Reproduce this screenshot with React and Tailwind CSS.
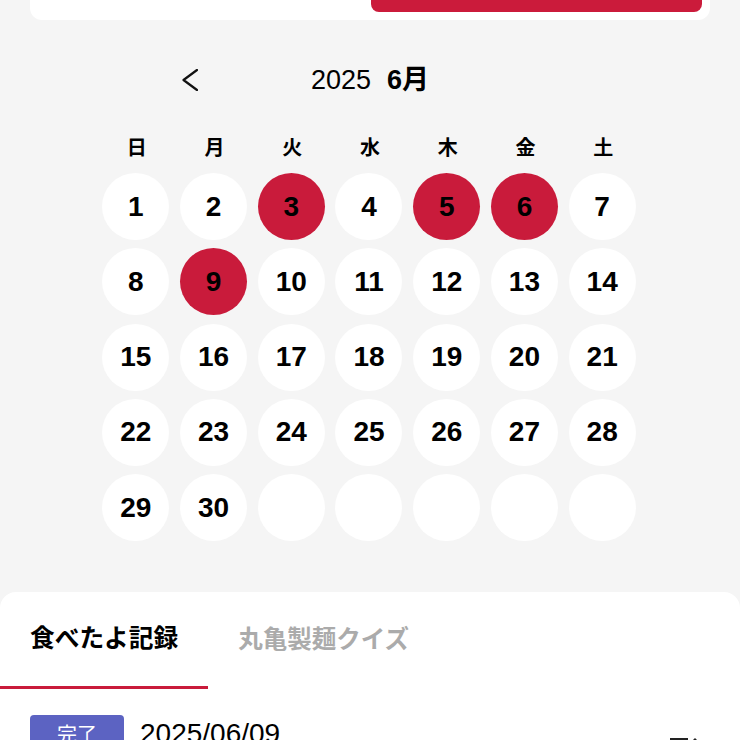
import React from "react";

const font = { fontFamily: '"Liberation Sans", "Noto Sans CJK JP", sans-serif' };

const weekdays = ["日", "月", "火", "水", "木", "金", "土"];
const eaten = [3, 5, 6, 9];

export default function App() {
  // June 2025 starts on a Sunday
  const days = [];
  for (let d = 1; d <= 30; d++) days.push(d);
  while (days.length < 35) days.push(null);

  return (
    <div
      className="w-[740px] h-[740px] overflow-hidden bg-[#f5f5f5] text-black"
      style={font}
    >
      {/* top card (scrolled off) */}
      <div className="mx-[30px] bg-white rounded-b-xl px-2 pb-2 flex justify-end">
        <div className="w-[331px] h-3 bg-[#cb1b3b] rounded-b-lg" />
      </div>

      {/* month header */}
      <div className="mt-[44px] w-[390px] mx-auto h-8 flex items-center justify-between">
        <button className="w-[30px] h-8 flex items-center justify-center">
          <svg width="16" height="22" viewBox="0 0 16 22" fill="none">
            <path d="M15 1 L1.5 11 L15 21" stroke="#111" strokeWidth="2.2" strokeLinecap="round" strokeLinejoin="round" />
          </svg>
        </button>
        <div className="text-[27px] leading-8 flex items-baseline">
          <span>2025</span>
          <span className="ml-[16px] font-bold">6月</span>
        </div>
        <div className="w-[30px] h-8" />
      </div>

      {/* weekdays */}
      <div className="mt-[38px] w-[544px] mx-auto grid grid-cols-7">
        {weekdays.map((w) => (
          <div key={w} className="text-center text-[20px] leading-7 font-semibold">
            {w}
          </div>
        ))}
      </div>

      {/* days */}
      <div className="mt-[11px] w-[544px] mx-auto -translate-x-px grid grid-cols-7 gap-y-[8.25px]">
        {days.map((d, i) => (
          <div key={i} className="flex justify-center">
            <div
              className={`w-[67px] h-[67px] rounded-full flex items-center justify-center text-[28px] font-bold ${
                eaten.includes(d) ? "bg-[#c91b3b]" : "bg-white"
              }`}
            >
              {d}
            </div>
          </div>
        ))}
      </div>

      {/* bottom panel */}
      <div className="mt-[51px] bg-white rounded-t-2xl">
        <div className="flex">
          <div className="h-[97px] px-[30px] flex items-center border-b-[3px] border-[#c91b3b] text-[24.7px] font-bold">
            食べたよ記録
          </div>
          <div className="h-[97px] px-[30px] flex items-center text-[24.5px] font-bold text-[#ababab]">
            丸亀製麺クイズ
          </div>
        </div>

        <div className="px-[30px] pt-[26px] flex items-start">
          <div className="w-[94px] h-[40px] rounded bg-[#5c63c2] text-white text-[20px] flex items-center justify-center">
            完了
          </div>
          <div className="ml-4 text-[28px] leading-none pt-[5px]">2025/06/09</div>
          <div className="ml-auto mt-[23px] mr-[10px]">
            <svg width="30" height="30" viewBox="0 0 30 30" fill="#222">
              <rect x="0" y="0" width="18" height="3" />
              <rect x="0" y="8" width="18" height="3" />
              <rect x="0" y="16" width="11" height="3" />
              <path d="M25 0 L29 4 L15 18 L11 18 L11 14 Z" />
            </svg>
          </div>
        </div>
      </div>
    </div>
  );
}
